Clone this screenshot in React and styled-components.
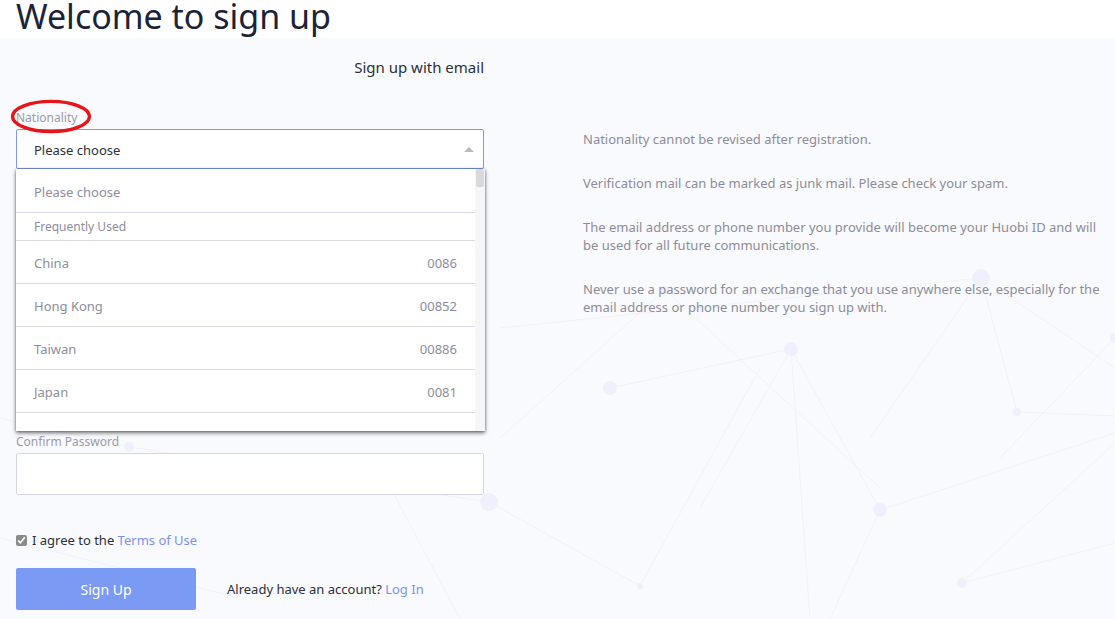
import React from "react";
import styled, { createGlobalStyle } from "styled-components";

// country list for the nationality dropdown
const frequent = [
  { name: "China", code: "0086" },
  { name: "Hong Kong", code: "00852" },
  { name: "Taiwan", code: "00886" },
  { name: "Japan", code: "0081" },
  { name: "Korea", code: "0082" },
  { name: "Singapore", code: "0065" },
];

const others = [
  ["Afghanistan", "0093"], ["Albania", "00355"], ["Algeria", "00213"], ["Andorra", "00376"],
  ["Angola", "00244"], ["Argentina", "0054"], ["Armenia", "00374"], ["Australia", "0061"],
  ["Austria", "0043"], ["Azerbaijan", "00994"], ["Bahrain", "00973"], ["Bangladesh", "00880"],
];

// faint network drawing behind the page
const nodes = [
  [981, 240, 9], [791, 311, 7], [610, 350, 7], [1017, 374, 4], [880, 472, 7],
  [962, 545, 5], [640, 548, 3], [489, 464, 9], [129, 409, 5], [665, 252, 4],
  [1115, 300, 5], [380, 430, 4],
];
const edges = [
  [981, 240, 1017, 374], [981, 240, 1115, 330], [981, 240, 870, 400],
  [610, 350, 791, 311], [791, 311, 880, 472], [791, 311, 810, 581],
  [791, 311, 700, 470], [880, 472, 1115, 395], [880, 472, 830, 581],
  [1017, 374, 1115, 378], [962, 545, 1115, 505], [962, 545, 1115, 405],
  [665, 252, 880, 450], [500, 400, 665, 252], [489, 464, 640, 548],
  [640, 548, 760, 330], [129, 409, 489, 464], [0, 380, 129, 409],
  [0, 500, 240, 560], [380, 430, 460, 581], [500, 290, 980, 240],
  [1115, 300, 1000, 420],
];

const Backdrop = () => (
  <BackdropSvg viewBox="0 0 1115 581" preserveAspectRatio="none">
    {edges.map(([x1, y1, x2, y2], i) => (
      <line key={i} x1={x1} y1={y1} x2={x2} y2={y2} stroke="#f0f2f9" strokeWidth="1" />
    ))}
    {nodes.map(([cx, cy, r], i) => (
      <circle key={i} cx={cx} cy={cy} r={r} fill="#eef1fb" />
    ))}
  </BackdropSvg>
);

const tips = [
  "Nationality cannot be revised after registration.",
  "Verification mail can be marked as junk mail. Please check your spam.",
  "The email address or phone number you provide will become your Huobi ID and will be used for all future communications.",
  "Never use a password for an exchange that you use anywhere else, especially for the email address or phone number you sign up with.",
];

export default function App() {
  return (
    <>
      <GlobalStyle />
      <Page>
        <Header>
          <Title>Welcome to sign up</Title>
        </Header>
        <Body>
          <Backdrop />
          <Main>
            <FormColumn>
              <TabRow>
                <Tab>Sign up with email</Tab>
              </TabRow>

              <Field first>
                <LabelWrap>
                  <Label>Nationality</Label>
                  <Circle viewBox="0 0 84 38">
                    <ellipse cx="42" cy="19" rx="39.5" ry="15.5" fill="none" stroke="#e8141b" strokeWidth="3.5" />
                  </Circle>
                </LabelWrap>
                <SelectBox>
                  <span>Please choose</span>
                  <Caret />
                </SelectBox>
                <Dropdown>
                  <OptionList>
                    <Option tall>Please choose</Option>
                    <GroupTitle>Frequently Used</GroupTitle>
                    {frequent.map((c) => (
                      <Option key={c.name}>
                        <span>{c.name}</span>
                        <span>{c.code}</span>
                      </Option>
                    ))}
                    {others.map(([name, code]) => (
                      <Option key={name}>
                        <span>{name}</span>
                        <span>{code}</span>
                      </Option>
                    ))}
                  </OptionList>
                  <ScrollTrack>
                    <ScrollThumb />
                  </ScrollTrack>
                </Dropdown>
              </Field>

              <Field>
                <Label>Email</Label>
                <Input />
              </Field>
              <Field>
                <Label>Email Verification Code</Label>
                <Input />
              </Field>
              <Field>
                <Label>Password</Label>
                <Input type="password" />
              </Field>
              <Field tight>
                <Label>Confirm Password</Label>
                <Input type="password" />
              </Field>

              <Agree>
                <Check type="checkbox" defaultChecked />
                <span>
                  I agree to the <Link href="#">Terms of Use</Link>
                </span>
              </Agree>

              <Actions>
                <SubmitButton>Sign Up</SubmitButton>
                <LoginText>
                  Already have an account? <Link href="#">Log In</Link>
                </LoginText>
              </Actions>
            </FormColumn>

            <Tips>
              {tips.map((t, i) => (
                <Tip key={i}>{t}</Tip>
              ))}
            </Tips>
          </Main>
        </Body>
      </Page>
    </>
  );
}

const GlobalStyle = createGlobalStyle`
  * { box-sizing: border-box; }
  html, body { margin: 0; padding: 0; }
  body {
    font-family: "Noto Sans", "Open Sans", sans-serif;
    background: #f9fafd;
    color: #333;
    overflow: hidden;
  }
`;

const Page = styled.div`
  min-height: 100vh;
  display: flex;
  flex-direction: column;
`;

const Header = styled.header`
  height: 38px;
  background: #fff;
  padding-left: 16px;
`;

const Title = styled.h1`
  margin: -3px 0 0;
  font-size: 34px;
  line-height: 38px;
  font-weight: 400;
  color: #1b2337;
  white-space: nowrap;
`;

const Body = styled.div`
  position: relative;
  flex: 1;
  background: #f9fafd;
`;

const BackdropSvg = styled.svg`
  position: absolute;
  inset: 0;
  width: 100%;
  height: 100%;
`;

const Main = styled.main`
  position: relative;
  display: flex;
  padding-left: 16px;
`;

const FormColumn = styled.div`
  width: 468px;
  flex-shrink: 0;
`;

const TabRow = styled.div`
  display: flex;
  justify-content: flex-end;
  padding-top: 19px;
  height: 71px;
`;

const Tab = styled.span`
  font-size: 15px;
  line-height: 20px;
  color: #2b2f3a;
`;

const Field = styled.div`
  position: relative;
  margin-top: ${(p) => (p.first ? "0" : p.tight ? "18px" : "20px")};
`;

const LabelWrap = styled.div`
  position: relative;
`;

const Label = styled.div`
  font-size: 12px;
  line-height: 18px;
  color: #9b9ba8;
  margin-bottom: 2px;
`;

const Circle = styled.svg`
  position: absolute;
  left: -6px;
  top: -11px;
  width: 82px;
  height: 37px;
  pointer-events: none;
`;

const SelectBox = styled.div`
  height: 40px;
  background: #fff;
  border: 1px solid #7b98ee;
  border-radius: 2px;
  display: flex;
  align-items: center;
  justify-content: space-between;
  padding: 1px 9px 0 17px;
  font-size: 13px;
  color: #2b2f3a;
`;

const Caret = styled.i`
  width: 0;
  height: 0;
  border-left: 5px solid transparent;
  border-right: 5px solid transparent;
  border-bottom: 5px solid #b8b8c2;
`;

const Dropdown = styled.div`
  position: absolute;
  z-index: 5;
  left: 0;
  top: 60px;
  width: 469px;
  height: 262px;
  display: flex;
  background: #fff;
  box-shadow: 0 2px 4px rgba(0, 0, 0, 0.55), 0 0 2px rgba(0, 0, 0, 0.3);
`;

const OptionList = styled.div`
  flex: 1;
  overflow: hidden;
`;

const ScrollTrack = styled.div`
  width: 10px;
  background: #f6f6f8;
  padding: 0 1px;
`;

const ScrollThumb = styled.div`
  height: 18px;
  background: #d9d9dc;
  border-radius: 2px;
`;

const Option = styled.div`
  height: ${(p) => (p.tall ? "44px" : "43px")};
  display: flex;
  align-items: center;
  justify-content: space-between;
  padding: 2px 18px 0;
  border-bottom: 1px solid #d9d9e8;
  font-size: 13px;
  color: #8d8d9b;
`;

const GroupTitle = styled.div`
  height: 28px;
  display: flex;
  align-items: center;
  padding-left: 18px;
  border-bottom: 1px solid #d9d9e8;
  font-size: 12px;
  color: #8d8d9b;
`;

const Input = styled.input`
  display: block;
  width: 100%;
  height: 42px;
  background: #fff;
  border: 1px solid #d6d6e6;
  border-radius: 2px;
  outline: none;
  padding: 0 16px;
  font-size: 13px;
`;

const Agree = styled.label`
  display: flex;
  align-items: center;
  gap: 5px;
  margin-top: 37px;
  font-size: 13px;
  line-height: 16px;
  color: #2b2f3a;
`;

const Check = styled.input`
  margin: 0;
  width: 11px;
  height: 11px;
  accent-color: #8a8a8a;
`;

const Link = styled.a`
  color: #7d8ff0;
  text-decoration: none;
`;

const Actions = styled.div`
  display: flex;
  align-items: center;
  gap: 31px;
  margin-top: 20px;
`;

const SubmitButton = styled.button`
  width: 180px;
  height: 42px;
  border: none;
  border-radius: 2px;
  background: #7b9af3;
  color: #fff;
  font-family: inherit;
  font-size: 14px;
  cursor: pointer;
`;

const LoginText = styled.span`
  font-size: 13px;
  color: #2b2f3a;
`;

const Tips = styled.div`
  margin-left: 99px;
  width: 528px;
  flex-shrink: 0;
  padding-top: 92px;
`;

const Tip = styled.p`
  margin: 0 0 26px;
  font-size: 13px;
  line-height: 18px;
  color: #8c8c99;
`;
